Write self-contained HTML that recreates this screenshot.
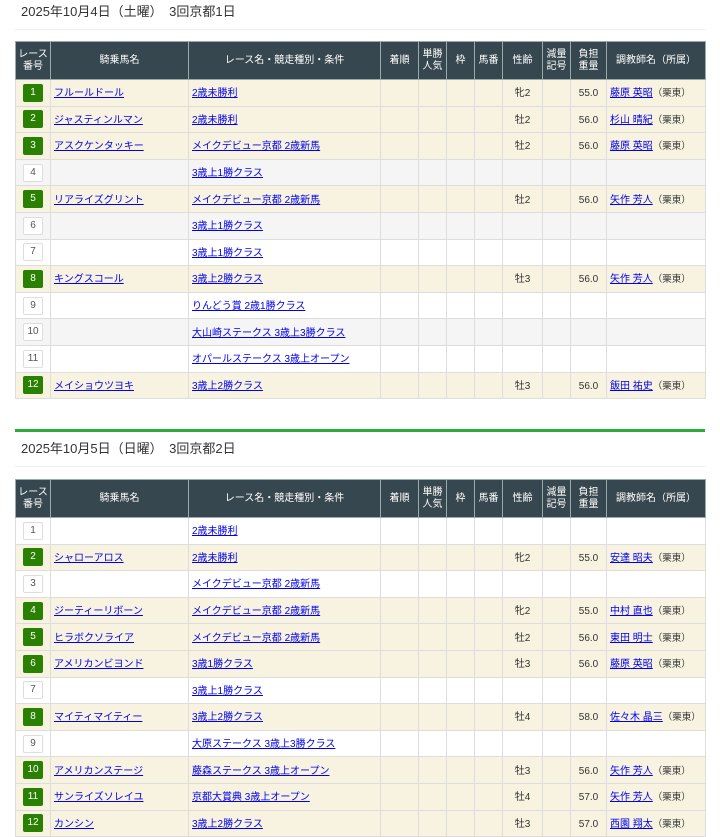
<!DOCTYPE html>
<html><head><meta charset="utf-8">
<style>
*{box-sizing:border-box;margin:0;padding:0}
body{width:720px;height:837px;overflow:hidden;background:#fff;font-family:"Liberation Sans","Noto Sans CJK JP",sans-serif;color:#333}
.date{position:absolute;left:15px;width:690px;font-size:13px;padding-left:6px;border-bottom:1px solid #eee;height:30px;line-height:24px}
.green{position:absolute;left:15px;width:690px;height:3px;background:#2eaa3a}
table{position:absolute;left:15px;width:690px;border-collapse:collapse;table-layout:fixed;font-size:10px}
th{background:#37474f;color:#fff;font-weight:normal;height:38px;border:1px solid #9aa;font-size:10px;line-height:12px;text-align:center;vertical-align:middle}
td{border:1px solid #ddd;height:26.6px;padding:3px 3px 0;white-space:nowrap;overflow:hidden;vertical-align:middle;line-height:12px}
tr.w td{background:#f7f3e0}
tr.g td{background:#f5f5f5}
a{color:#0000ee;text-decoration:underline}
td.c{text-align:center}
td.r{text-align:center}
.b{display:inline-block;vertical-align:middle;margin-top:-3px;width:20px;height:18px;line-height:16px;text-align:center;font-size:10px;border:1px solid #ddd;background:#fff;color:#555;border-radius:2px}
.b.on{background:#2a8000;border-color:#2a8000;color:#fff}
.s{font-size:9.5px;color:#333}
</style></head><body>
<div class="date" style="top:0">2025年10月4日（土曜）　3回京都1日</div>
<table style="top:41px">
<colgroup><col style="width:35px"><col style="width:138px"><col style="width:192px"><col style="width:38px"><col style="width:28px"><col style="width:28px"><col style="width:28px"><col style="width:40px"><col style="width:28px"><col style="width:36px"><col style="width:99px"></colgroup>
<tr><th>レース<br>番号</th><th>騎乗馬名</th><th>レース名・競走種別・条件</th><th>着順</th><th>単勝<br>人気</th><th>枠</th><th>馬番</th><th>性齢</th><th>減量<br>記号</th><th>負担<br>重量</th><th>調教師名（所属）</th></tr>
<tr class="w"><td class="c"><span class="b on">1</span></td><td><a>フルールドール</a></td><td><a>2歳未勝利</a></td><td></td><td></td><td></td><td></td><td class="c">牝2</td><td></td><td class="r">55.0</td><td><a>藤原 英昭</a><span class="s">（栗東）</span></td></tr>
<tr class="w"><td class="c"><span class="b on">2</span></td><td><a>ジャスティンルマン</a></td><td><a>2歳未勝利</a></td><td></td><td></td><td></td><td></td><td class="c">牡2</td><td></td><td class="r">56.0</td><td><a>杉山 晴紀</a><span class="s">（栗東）</span></td></tr>
<tr class="w"><td class="c"><span class="b on">3</span></td><td><a>アスクケンタッキー</a></td><td><a>メイクデビュー京都 2歳新馬</a></td><td></td><td></td><td></td><td></td><td class="c">牡2</td><td></td><td class="r">56.0</td><td><a>藤原 英昭</a><span class="s">（栗東）</span></td></tr>
<tr class="g"><td class="c"><span class="b">4</span></td><td></td><td><a>3歳上1勝クラス</a></td><td></td><td></td><td></td><td></td><td></td><td></td><td></td><td></td></tr>
<tr class="w"><td class="c"><span class="b on">5</span></td><td><a>リアライズグリント</a></td><td><a>メイクデビュー京都 2歳新馬</a></td><td></td><td></td><td></td><td></td><td class="c">牡2</td><td></td><td class="r">56.0</td><td><a>矢作 芳人</a><span class="s">（栗東）</span></td></tr>
<tr class="g"><td class="c"><span class="b">6</span></td><td></td><td><a>3歳上1勝クラス</a></td><td></td><td></td><td></td><td></td><td></td><td></td><td></td><td></td></tr>
<tr><td class="c"><span class="b">7</span></td><td></td><td><a>3歳上1勝クラス</a></td><td></td><td></td><td></td><td></td><td></td><td></td><td></td><td></td></tr>
<tr class="w"><td class="c"><span class="b on">8</span></td><td><a>キングスコール</a></td><td><a>3歳上2勝クラス</a></td><td></td><td></td><td></td><td></td><td class="c">牡3</td><td></td><td class="r">56.0</td><td><a>矢作 芳人</a><span class="s">（栗東）</span></td></tr>
<tr><td class="c"><span class="b">9</span></td><td></td><td><a>りんどう賞 2歳1勝クラス</a></td><td></td><td></td><td></td><td></td><td></td><td></td><td></td><td></td></tr>
<tr class="g"><td class="c"><span class="b">10</span></td><td></td><td><a>大山崎ステークス 3歳上3勝クラス</a></td><td></td><td></td><td></td><td></td><td></td><td></td><td></td><td></td></tr>
<tr><td class="c"><span class="b">11</span></td><td></td><td><a>オパールステークス 3歳上オープン</a></td><td></td><td></td><td></td><td></td><td></td><td></td><td></td><td></td></tr>
<tr class="w"><td class="c"><span class="b on">12</span></td><td><a>メイショウツヨキ</a></td><td><a>3歳上2勝クラス</a></td><td></td><td></td><td></td><td></td><td class="c">牡3</td><td></td><td class="r">56.0</td><td><a>飯田 祐史</a><span class="s">（栗東）</span></td></tr>
</table>
<div class="green" style="top:429px"></div>
<div class="date" style="top:437px">2025年10月5日（日曜）　3回京都2日</div>
<table style="top:479px">
<colgroup><col style="width:35px"><col style="width:138px"><col style="width:192px"><col style="width:38px"><col style="width:28px"><col style="width:28px"><col style="width:28px"><col style="width:40px"><col style="width:28px"><col style="width:36px"><col style="width:99px"></colgroup>
<tr><th>レース<br>番号</th><th>騎乗馬名</th><th>レース名・競走種別・条件</th><th>着順</th><th>単勝<br>人気</th><th>枠</th><th>馬番</th><th>性齢</th><th>減量<br>記号</th><th>負担<br>重量</th><th>調教師名（所属）</th></tr>
<tr><td class="c"><span class="b">1</span></td><td></td><td><a>2歳未勝利</a></td><td></td><td></td><td></td><td></td><td></td><td></td><td></td><td></td></tr>
<tr class="w"><td class="c"><span class="b on">2</span></td><td><a>シャローアロス</a></td><td><a>2歳未勝利</a></td><td></td><td></td><td></td><td></td><td class="c">牝2</td><td></td><td class="r">55.0</td><td><a>安達 昭夫</a><span class="s">（栗東）</span></td></tr>
<tr><td class="c"><span class="b">3</span></td><td></td><td><a>メイクデビュー京都 2歳新馬</a></td><td></td><td></td><td></td><td></td><td></td><td></td><td></td><td></td></tr>
<tr class="w"><td class="c"><span class="b on">4</span></td><td><a>ジーティーリボーン</a></td><td><a>メイクデビュー京都 2歳新馬</a></td><td></td><td></td><td></td><td></td><td class="c">牝2</td><td></td><td class="r">55.0</td><td><a>中村 直也</a><span class="s">（栗東）</span></td></tr>
<tr class="w"><td class="c"><span class="b on">5</span></td><td><a>ヒラボクソライア</a></td><td><a>メイクデビュー京都 2歳新馬</a></td><td></td><td></td><td></td><td></td><td class="c">牡2</td><td></td><td class="r">56.0</td><td><a>東田 明士</a><span class="s">（栗東）</span></td></tr>
<tr class="w"><td class="c"><span class="b on">6</span></td><td><a>アメリカンビヨンド</a></td><td><a>3歳1勝クラス</a></td><td></td><td></td><td></td><td></td><td class="c">牡3</td><td></td><td class="r">56.0</td><td><a>藤原 英昭</a><span class="s">（栗東）</span></td></tr>
<tr><td class="c"><span class="b">7</span></td><td></td><td><a>3歳上1勝クラス</a></td><td></td><td></td><td></td><td></td><td></td><td></td><td></td><td></td></tr>
<tr class="w"><td class="c"><span class="b on">8</span></td><td><a>マイティマイティー</a></td><td><a>3歳上2勝クラス</a></td><td></td><td></td><td></td><td></td><td class="c">牡4</td><td></td><td class="r">58.0</td><td><a>佐々木 晶三</a><span class="s">（栗東）</span></td></tr>
<tr><td class="c"><span class="b">9</span></td><td></td><td><a>大原ステークス 3歳上3勝クラス</a></td><td></td><td></td><td></td><td></td><td></td><td></td><td></td><td></td></tr>
<tr class="w"><td class="c"><span class="b on">10</span></td><td><a>アメリカンステージ</a></td><td><a>藤森ステークス 3歳上オープン</a></td><td></td><td></td><td></td><td></td><td class="c">牡3</td><td></td><td class="r">56.0</td><td><a>矢作 芳人</a><span class="s">（栗東）</span></td></tr>
<tr class="w"><td class="c"><span class="b on">11</span></td><td><a>サンライズソレイユ</a></td><td><a>京都大賞典 3歳上オープン</a></td><td></td><td></td><td></td><td></td><td class="c">牡4</td><td></td><td class="r">57.0</td><td><a>矢作 芳人</a><span class="s">（栗東）</span></td></tr>
<tr class="w"><td class="c"><span class="b on">12</span></td><td><a>カンシン</a></td><td><a>3歳上2勝クラス</a></td><td></td><td></td><td></td><td></td><td class="c">牡3</td><td></td><td class="r">57.0</td><td><a>西園 翔太</a><span class="s">（栗東）</span></td></tr>
</table>
</body></html>
